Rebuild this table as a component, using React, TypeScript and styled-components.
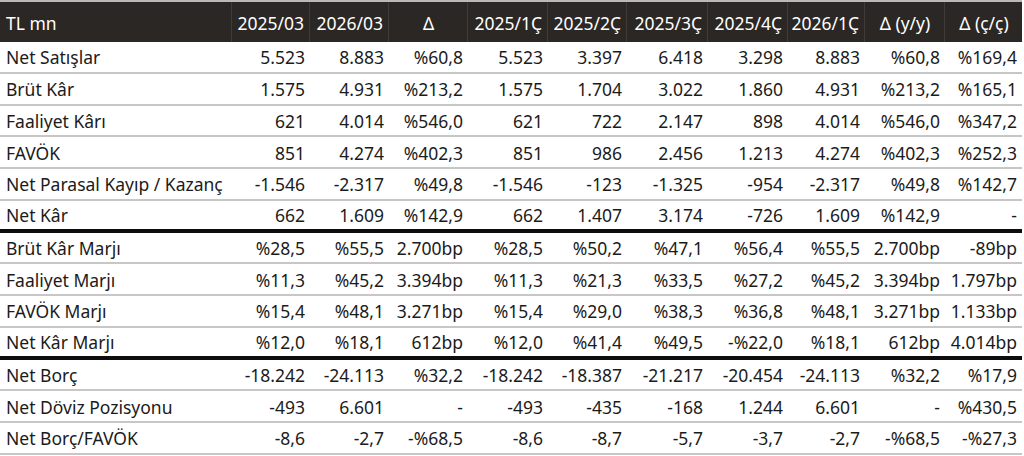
import React from "react";
import styled, { createGlobalStyle } from "styled-components";

const Global = createGlobalStyle`
  html, body { margin: 0; padding: 0; background: #ffffff; }
  body { font-family: "Noto Sans", "Open Sans", Arial, sans-serif; }
`;

const COLS = "232px 78px 79px 79px 80px 79px 81px 80px 77px 80px 77px";

const Table = styled.div`
  width: 1022px;
  display: flex;
  flex-direction: column;
  font-family: "Noto Sans", "Open Sans", Arial, sans-serif;
  font-size: 17.5px;
  color: #1b1b1b;
`;

const HeadRow = styled.div`
  display: grid;
  grid-template-columns: ${COLS};
  height: 42px;
  box-sizing: border-box;
  border-top: 2px solid #b9b9b9;
  background: #2b2724;
  color: #ffffff;
`;

const HeadCell = styled.div<{ $align: "left" | "right" | "center" }>`
  display: flex;
  align-items: center;
  justify-content: ${(p) =>
    p.$align === "left" ? "flex-start" : p.$align === "center" ? "center" : "flex-end"};
  padding: 1px 5px 0 6px;
  box-sizing: border-box;
  white-space: nowrap;
  border-right: 1px solid #403b37;
  &:last-child { border-right: none; }
`;

const Row = styled.div<{ $thick?: boolean }>`
  display: grid;
  grid-template-columns: ${COLS};
  height: 31.75px;
  box-sizing: border-box;
  padding-top: 1px;
  border-bottom: ${(p) => (p.$thick ? "4px solid #0d0d0d" : "2px solid #c7c7c7")};
`;

const LabelCell = styled.div`
  display: flex;
  align-items: center;
  padding-left: 6px;
  white-space: nowrap;
`;

const ValueCell = styled.div`
  display: flex;
  align-items: center;
  justify-content: flex-end;
  padding-right: 5px;
  white-space: nowrap;
`;

const headers: { t: string; a: "left" | "right" | "center" }[] = [
  { t: "TL mn", a: "left" },
  { t: "2025/03", a: "right" },
  { t: "2026/03", a: "right" },
  { t: "Δ", a: "center" },
  { t: "2025/1Ç", a: "right" },
  { t: "2025/2Ç", a: "right" },
  { t: "2025/3Ç", a: "right" },
  { t: "2025/4Ç", a: "right" },
  { t: "2026/1Ç", a: "right" },
  { t: "Δ (y/y)", a: "center" },
  { t: "Δ (ç/ç)", a: "center" },
];

const rows: { label: string; values: string[]; thick?: boolean }[] = [
  { label: "Net Satışlar", values: ["5.523", "8.883", "%60,8", "5.523", "3.397", "6.418", "3.298", "8.883", "%60,8", "%169,4"] },
  { label: "Brüt Kâr", values: ["1.575", "4.931", "%213,2", "1.575", "1.704", "3.022", "1.860", "4.931", "%213,2", "%165,1"] },
  { label: "Faaliyet Kârı", values: ["621", "4.014", "%546,0", "621", "722", "2.147", "898", "4.014", "%546,0", "%347,2"] },
  { label: "FAVÖK", values: ["851", "4.274", "%402,3", "851", "986", "2.456", "1.213", "4.274", "%402,3", "%252,3"] },
  { label: "Net Parasal Kayıp / Kazanç", values: ["-1.546", "-2.317", "%49,8", "-1.546", "-123", "-1.325", "-954", "-2.317", "%49,8", "%142,7"] },
  { label: "Net Kâr", values: ["662", "1.609", "%142,9", "662", "1.407", "3.174", "-726", "1.609", "%142,9", "-"], thick: true },
  { label: "Brüt Kâr Marjı", values: ["%28,5", "%55,5", "2.700bp", "%28,5", "%50,2", "%47,1", "%56,4", "%55,5", "2.700bp", "-89bp"] },
  { label: "Faaliyet Marjı", values: ["%11,3", "%45,2", "3.394bp", "%11,3", "%21,3", "%33,5", "%27,2", "%45,2", "3.394bp", "1.797bp"] },
  { label: "FAVÖK Marjı", values: ["%15,4", "%48,1", "3.271bp", "%15,4", "%29,0", "%38,3", "%36,8", "%48,1", "3.271bp", "1.133bp"] },
  { label: "Net Kâr Marjı", values: ["%12,0", "%18,1", "612bp", "%12,0", "%41,4", "%49,5", "-%22,0", "%18,1", "612bp", "4.014bp"], thick: true },
  { label: "Net Borç", values: ["-18.242", "-24.113", "%32,2", "-18.242", "-18.387", "-21.217", "-20.454", "-24.113", "%32,2", "%17,9"] },
  { label: "Net Döviz Pozisyonu", values: ["-493", "6.601", "-", "-493", "-435", "-168", "1.244", "6.601", "-", "%430,5"] },
  { label: "Net Borç/FAVÖK", values: ["-8,6", "-2,7", "-%68,5", "-8,6", "-8,7", "-5,7", "-3,7", "-2,7", "-%68,5", "-%27,3"] },
];

export default function App() {
  return (
    <>
      <Global />
      <Table>
        <HeadRow>
          {headers.map((h) => (
            <HeadCell key={h.t} $align={h.a}>
              {h.t}
            </HeadCell>
          ))}
        </HeadRow>
        {rows.map((r) => (
          <Row key={r.label} $thick={r.thick}>
            <LabelCell>{r.label}</LabelCell>
            {r.values.map((v, i) => (
              <ValueCell key={i}>{v}</ValueCell>
            ))}
          </Row>
        ))}
      </Table>
    </>
  );
}
